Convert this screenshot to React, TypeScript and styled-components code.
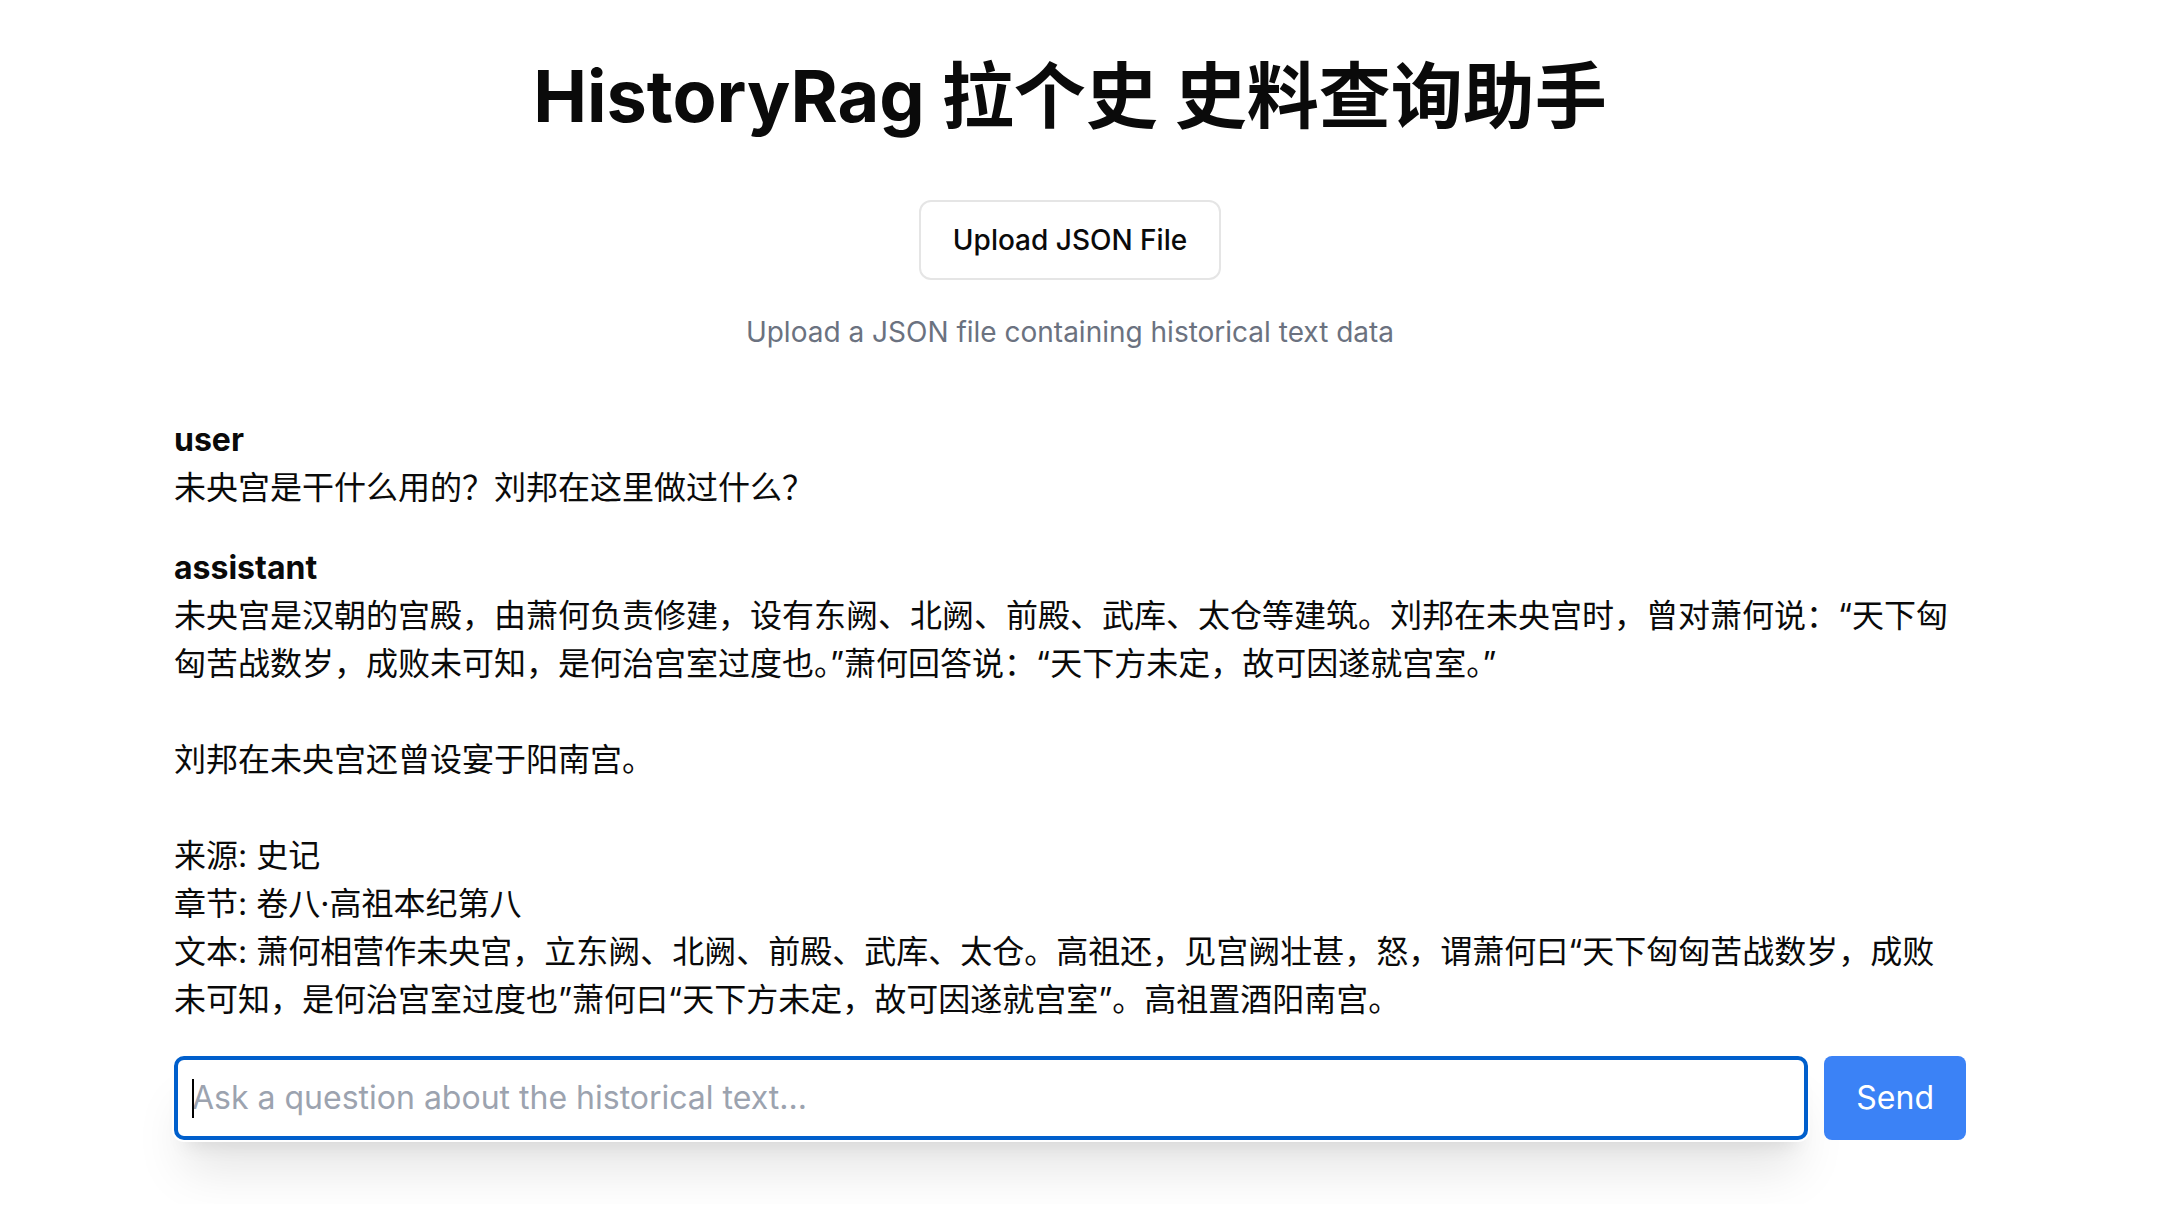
import React, { useState } from 'react';
import styled, { createGlobalStyle } from 'styled-components';

const GlobalStyle = createGlobalStyle`
  *, *::before, *::after {
    box-sizing: border-box;
  }

  body {
    margin: 0;
    background: #ffffff;
    color: #0a0a0a;
    font-family: Inter, 'Noto Sans CJK SC', sans-serif;
    font-size: 32px;
    line-height: 48px;
    -webkit-font-smoothing: antialiased;
  }
`;

const Page = styled.main`
  display: flex;
  justify-content: center;
  padding: 56px 42px 64px 0;
`;

const Column = styled.div`
  display: flex;
  flex-direction: column;
  width: 100%;
  max-width: 1792px;
`;

const Title = styled.h1`
  margin: 0 0 64px;
  font-size: 72px;
  font-weight: 700;
  line-height: 80px;
  text-align: center;
`;

const Upload = styled.section`
  display: flex;
  flex-direction: column;
  align-items: center;
  gap: 32px;
  margin-bottom: 64px;
  font-size: 28px;
  line-height: 40px;
`;

const UploadButton = styled.button`
  padding: 18px 32px;
  border: 2px solid #e5e5e5;
  border-radius: 12px;
  background: #ffffff;
  color: inherit;
  font: inherit;
  font-weight: 500;
  cursor: pointer;
`;

const UploadHint = styled.p`
  margin: 0;
  color: #6b7280;
`;

const Messages = styled.div`
  display: flex;
  flex-direction: column;
  gap: 32px;
  margin-bottom: 32px;
`;

const Role = styled.div`
  font-weight: 700;
`;

const MessageText = styled.div`
  white-space: pre-wrap;
`;

const AskForm = styled.form`
  display: flex;
  gap: 16px;
`;

const Field = styled.div`
  position: relative;
  display: flex;
  flex: 1;
  min-width: 0;
`;

const QuestionInput = styled.input`
  width: 100%;
  padding: 14px;
  border: 4px solid #005fcc;
  border-radius: 10px;
  outline: none;
  background: #ffffff;
  box-shadow:
    0 0 0 2px #ffffff,
    0 40px 50px -10px rgba(0, 0, 0, 0.1),
    0 16px 20px -12px rgba(0, 0, 0, 0.1);
  color: inherit;
  font: inherit;

  &::placeholder {
    color: #9ca3af;
    opacity: 1;
  }
`;

const Caret = styled.span`
  position: absolute;
  top: 23px;
  left: 18px;
  width: 2px;
  height: 39px;
  background: #000000;
  pointer-events: none;
`;

const SendButton = styled.button`
  position: relative;
  padding: 18px 32px;
  border: 0;
  border-radius: 8px;
  background: #3b82f6;
  color: #ffffff;
  font: inherit;
  cursor: pointer;
`;

const messages = [
  {
    role: 'user',
    text: '未央宫是干什么用的？刘邦在这里做过什么？',
  },
  {
    role: 'assistant',
    text: [
      '未央宫是汉朝的宫殿，由萧何负责修建，设有东阙、北阙、前殿、武库、太仓等建筑。刘邦在未央宫时，曾对萧何说：“天下匈匈苦战数岁，成败未可知，是何治宫室过度也。”萧何回答说：“天下方未定，故可因遂就宫室。”',
      '',
      '刘邦在未央宫还曾设宴于阳南宫。',
      '',
      '来源: 史记',
      '章节: 卷八·高祖本纪第八',
      '文本: 萧何相营作未央宫，立东阙、北阙、前殿、武库、太仓。高祖还，见宫阙壮甚，怒，谓萧何曰“天下匈匈苦战数岁，成败未可知，是何治宫室过度也”萧何曰“天下方未定，故可因遂就宫室”。高祖置酒阳南宫。',
    ].join('\n'),
  },
];

export default function App() {
  const [question, setQuestion] = useState('');

  return (
    <>
      <GlobalStyle />
      <Page lang="zh-CN">
        <Column>
          <Title>HistoryRag 拉个史 史料查询助手</Title>
          <Upload>
            <UploadButton type="button">Upload JSON File</UploadButton>
            <UploadHint>Upload a JSON file containing historical text data</UploadHint>
          </Upload>
          <Messages>
            {messages.map((message) => (
              <article key={message.role}>
                <Role>{message.role}</Role>
                <MessageText>{message.text}</MessageText>
              </article>
            ))}
          </Messages>
          <AskForm onSubmit={(event) => event.preventDefault()}>
            <Field>
              <QuestionInput
                type="text"
                aria-label="Question"
                placeholder="Ask a question about the historical text..."
                value={question}
                onChange={(event) => setQuestion(event.target.value)}
              />
              {question === '' && <Caret />}
            </Field>
            <SendButton type="submit">Send</SendButton>
          </AskForm>
        </Column>
      </Page>
    </>
  );
}
